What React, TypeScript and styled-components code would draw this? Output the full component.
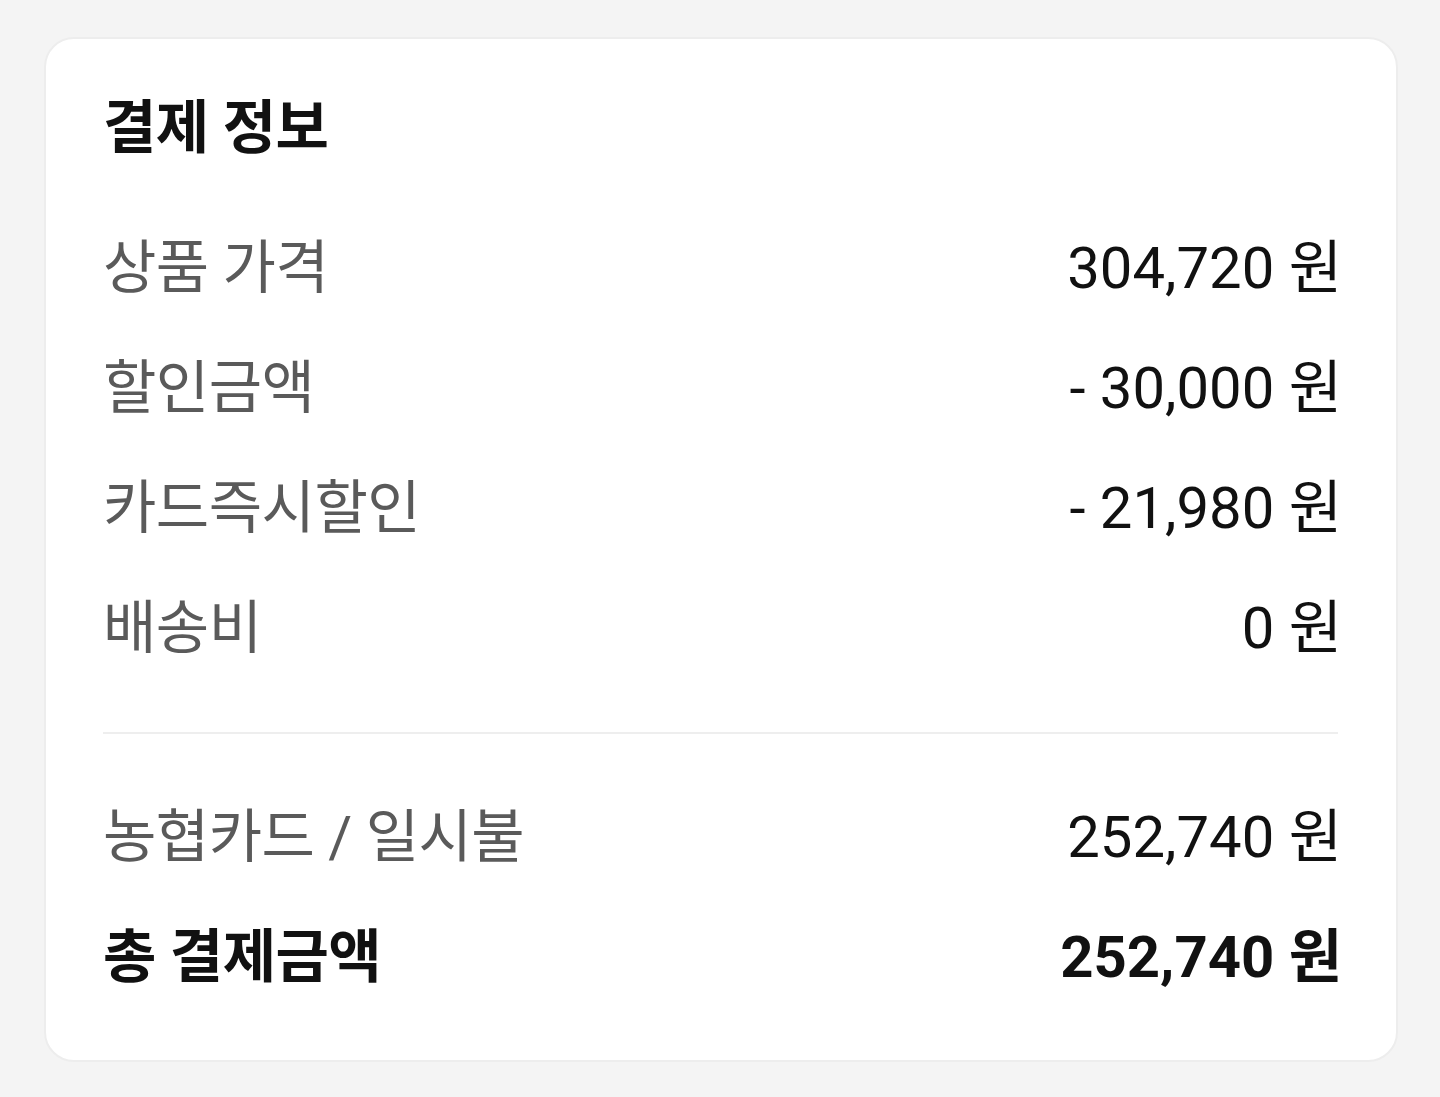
import React from "react";
import styled, { createGlobalStyle } from "styled-components";

const GlobalStyle = createGlobalStyle`
  html, body {
    margin: 0;
    padding: 0;
    background: #f4f4f4;
  }
  body {
    font-family: Roboto, "Noto Sans CJK KR", sans-serif;
    -webkit-font-smoothing: antialiased;
  }
`;

const Page = styled.div`
  padding: 37px 42px 35px 44px;
`;

const Card = styled.section`
  box-sizing: border-box;
  width: 1354px;
  height: 1025px;
  background: #ffffff;
  border: 2px solid #ededed;
  border-radius: 30px;
  padding: 49px 54px 43px 57px;
  display: flex;
  flex-direction: column;
`;

const Title = styled.h2`
  margin: 0 0 40px 0;
  height: 80px;
  line-height: 80px;
  font-size: 58px;
  font-weight: 700;
  color: #111111;
  letter-spacing: -0.5px;
`;

const Row = styled.div<{ $strong?: boolean }>`
  display: flex;
  justify-content: space-between;
  align-items: center;
  height: 120px;
  font-size: 58px;
  line-height: 120px;
  font-weight: ${(p) => (p.$strong ? 700 : 400)};
`;

const Label = styled.span<{ $strong?: boolean }>`
  color: ${(p) => (p.$strong ? "#111111" : "#5a5a5a")};
  letter-spacing: -0.5px;
`;

const Value = styled.span`
  color: #111111;
`;

const Divider = styled.hr`
  margin: 44px 4px 43px 0;
  border: none;
  height: 3px;
  background: #eeeeee;
`;

type Item = { label: string; value: string };

const items: Item[] = [
  { label: "상품 가격", value: "304,720 원" },
  { label: "할인금액", value: "- 30,000 원" },
  { label: "카드즉시할인", value: "- 21,980 원" },
  { label: "배송비", value: "0 원" },
];

export default function App() {
  return (
    <>
      <GlobalStyle />
      <Page>
        <Card>
          <Title>결제 정보</Title>
          {items.map((it) => (
            <Row key={it.label}>
              <Label>{it.label}</Label>
              <Value>{it.value}</Value>
            </Row>
          ))}
          <Divider />
          <Row>
            <Label>농협카드 / 일시불</Label>
            <Value>252,740 원</Value>
          </Row>
          <Row $strong>
            <Label $strong>총 결제금액</Label>
            <Value>252,740 원</Value>
          </Row>
        </Card>
      </Page>
    </>
  );
}
